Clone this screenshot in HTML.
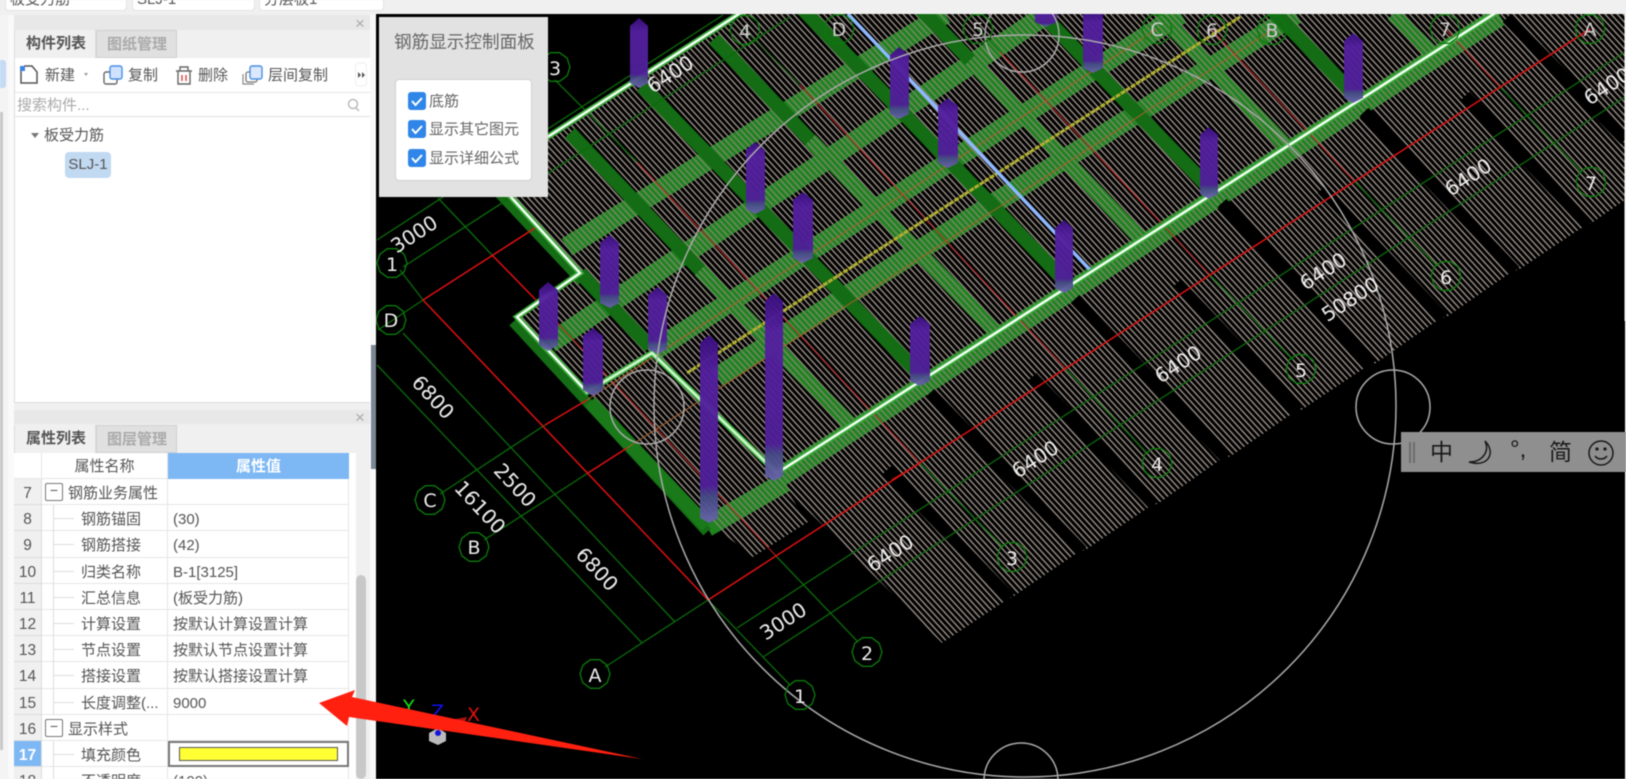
<!DOCTYPE html>
<html lang="zh"><head><meta charset="utf-8"><title>钢筋显示控制面板</title>
<style>
*{box-sizing:border-box}
html,body{margin:0;padding:0;width:1626px;height:779px;overflow:hidden;background:#f0f0f0}
body{font-family:"Liberation Sans","Noto Sans CJK SC",sans-serif;color:#555;font-size:15px}
#w{position:absolute;left:0;top:0;width:1626px;height:779px;overflow:hidden;filter:blur(.45px)}
.a{position:absolute;white-space:nowrap;line-height:1}
.row{display:flex;height:26.2px;line-height:30px}
.i{width:28px;background:#f0f0f0;border:1px solid #dcdcdc;border-width:0 1px 1px 0;text-align:center;font-size:15.5px}
.n{width:126px;border:solid #e6e6e6;border-width:0 1px 1px 0;position:relative;padding-left:39px}
.v{width:181px;border:solid #e6e6e6;border-width:0 1px 1px 0;padding-left:5px;font-size:15px}
.g{padding-left:26px}
.g::before{content:"−";position:absolute;left:3px;top:4px;width:16px;height:16px;border:1px solid #777;border-radius:2px;line-height:13px;text-align:center;font-size:14px;color:#555}
.n:not(.g)::before{content:"";position:absolute;left:12px;top:13px;width:20px;border-top:1px solid #ddd}
.n:not(.g)::after{content:"";position:absolute;left:11px;top:0;height:26px;border-left:1px solid #ddd}
</style></head><body><div id="w">

<!-- top fields -->
<div class="a" style="left:5px;top:-4px;width:122px;height:15px;background:#fff;border-radius:4px;border:1px solid #e4e4e4"></div>
<div class="a" style="left:132px;top:-4px;width:123px;height:15px;background:#fff;border-radius:4px;border:1px solid #e4e4e4"></div>
<div class="a" style="left:259px;top:-4px;width:125px;height:15px;background:#fff;border-radius:4px;border:1px solid #e4e4e4"></div>
<div class="a" style="left:10px;top:-8px;font-size:15px">板受力筋</div>
<div class="a" style="left:137px;top:-8px;font-size:15px">SLJ-1</div>
<div class="a" style="left:264px;top:-8px;font-size:15px">分层板1</div>

<!-- far-left stub -->
<div class="a" style="left:0;top:15px;width:8px;height:764px;background:#f4f4f4"></div>
<div class="a" style="left:0;top:60px;width:6px;height:28px;background:#c5daf5;border-radius:0 3px 3px 0"></div>
<div class="a" style="left:0;top:112px;width:3px;height:638px;background:#c8c8c8"></div>
<div class="a" style="left:8px;top:15px;width:6px;height:764px;background:#fafafa"></div>

<!-- panel 1 -->
<div class="a" style="left:14px;top:15px;width:356px;height:15px;background:#e8e8e8"></div>
<div class="a" style="left:355px;top:15px;font-size:17px;color:#aaa">×</div>
<div class="a" style="left:14px;top:30px;width:82px;height:28px;background:#f0f0f0;border:1px solid #dcdcdc;border-width:0 1px 0 1px;font-weight:bold;font-size:15px;padding:6px 0 0 11px;color:#555">构件列表</div>
<div class="a" style="left:96px;top:30px;width:81px;height:28px;background:#e0e0e0;border:1px solid #d0d0d0;font-size:15px;padding:6px 0 0 10px;color:#aaa;font-weight:bold">图纸管理</div>
<div class="a" style="left:14px;top:58px;width:356px;height:345px;background:#fff;border-left:1px solid #ddd;border-bottom:1px solid #ddd"></div>
<div class="a" style="left:15px;top:92px;width:355px;height:1px;background:#e6e6e6"></div>
<div class="a" style="left:15px;top:116px;width:355px;height:1px;background:#e0e0e0"></div>

<svg class="a" style="left:0;top:0" width="372" height="150" viewBox="0 0 372 150" fill="none">
<path d="M21 71V83H37V72L32 66H24" stroke="#555" stroke-width="1.5"/><rect x="20" y="66" width="5" height="5" fill="#3d83e0"/>
<path d="M84 73l4 0-2 3z" fill="#999"/>
<rect x="104" y="72" width="13" height="12" rx="2" stroke="#666" stroke-width="1.4"/>
<rect x="110" y="66" width="12" height="13" rx="2" fill="#cfe2ff" stroke="#4a8fe0" stroke-width="1.4"/>
<path d="M176 71H192M180 71V67H188V71M178 71V84H190V71" stroke="#666" stroke-width="1.4"/><path d="M182 75V81M186 75V81" stroke="#d94040" stroke-width="1.4"/>
<path d="M243 74V84H254" stroke="#888" stroke-width="1.2"/><rect x="246" y="72" width="11" height="10" rx="2" stroke="#777" stroke-width="1.3"/>
<rect x="250" y="66" width="12" height="13" rx="2" fill="#dbe8ff" stroke="#4a8fe0" stroke-width="1.4"/>
<rect x="355.5" y="63" width="11" height="23" rx="3" fill="#fff" stroke="#eee"/>
<path d="M358 72l3 3-3 3zM362 72l3 3-3 3z" fill="#555"/>
<circle cx="353" cy="104" r="4.5" stroke="#bbb" stroke-width="1.5"/><path d="M356 108l3 3" stroke="#bbb" stroke-width="1.5"/>
<path d="M31 133h8l-4 5z" fill="#777"/>
</svg>
<div class="a" style="left:45px;top:68px">新建</div>
<div class="a" style="left:128px;top:68px">复制</div>
<div class="a" style="left:198px;top:68px">删除</div>
<div class="a" style="left:268px;top:68px">层间复制</div>
<div class="a" style="left:17px;top:98px;color:#aaa;font-size:15px">搜索构件...</div>
<div class="a" style="left:44px;top:128px;font-size:15px">板受力筋</div>
<div class="a" style="left:65px;top:152px;width:46px;height:26px;background:#c2d9f2;border-radius:4px;line-height:26px;text-align:center;font-size:15px">SLJ-1</div>

<!-- panel 2 -->
<div class="a" style="left:14px;top:410px;width:356px;height:14px;background:#e8e8e8"></div>
<div class="a" style="left:355px;top:409px;font-size:17px;color:#aaa">×</div>
<div class="a" style="left:14px;top:425px;width:82px;height:28px;background:#f0f0f0;border:1px solid #dcdcdc;border-width:0 1px 0 1px;font-weight:bold;font-size:15px;padding:6px 0 0 11px;color:#555">属性列表</div>
<div class="a" style="left:96px;top:425px;width:81px;height:28px;background:#e0e0e0;border:1px solid #d0d0d0;font-size:15px;padding:6px 0 0 10px;color:#aaa;font-weight:bold">图层管理</div>
<div class="a" style="left:14px;top:453px;width:342px;height:326px;background:#fff"></div>
<div class="a" style="left:14px;top:453px;width:28px;height:26px;background:#fff;border-right:1px solid #e6e6e6;border-bottom:1px solid #e6e6e6"></div>
<div class="a" style="left:42px;top:453px;width:126px;height:26px;text-align:center;line-height:27px;background:#fff;border-right:1px solid #e6e6e6;border-bottom:1px solid #e6e6e6">属性名称</div>
<div class="a" style="left:168px;top:453px;width:181px;height:26px;text-align:center;line-height:27px;background:#7db8f5;color:#fff;font-weight:bold">属性值</div>
<div class="a" style="left:14px;top:479px;width:335px;white-space:normal;color:#555">
<div class="row"><div class="i">7</div><div class="n g">钢筋业务属性</div><div class="v"></div></div>
<div class="row"><div class="i">8</div><div class="n">钢筋锚固</div><div class="v">(30)</div></div>
<div class="row"><div class="i">9</div><div class="n">钢筋搭接</div><div class="v">(42)</div></div>
<div class="row"><div class="i">10</div><div class="n">归类名称</div><div class="v">B-1[3125]</div></div>
<div class="row"><div class="i">11</div><div class="n">汇总信息</div><div class="v">(板受力筋)</div></div>
<div class="row"><div class="i">12</div><div class="n">计算设置</div><div class="v">按默认计算设置计算</div></div>
<div class="row"><div class="i">13</div><div class="n">节点设置</div><div class="v">按默认节点设置计算</div></div>
<div class="row"><div class="i">14</div><div class="n">搭接设置</div><div class="v">按默认搭接设置计算</div></div>
<div class="row"><div class="i">15</div><div class="n">长度调整(...</div><div class="v">9000</div></div>
<div class="row"><div class="i">16</div><div class="n g">显示样式</div><div class="v"></div></div>
<div class="row"><div class="i" style="background:#7db8f5;color:#fff;font-weight:bold">17</div><div class="n">填充颜色</div><div class="v" style="border:2px solid #777;position:relative"><span style="position:absolute;left:9px;top:4px;width:159px;height:14px;background:#ffff33;border:1px solid #555"></span></div></div>
<div class="row"><div class="i">18</div><div class="n">不透明度</div><div class="v">(100)</div></div>
</div>
<div class="a" style="left:356px;top:575px;width:10px;height:204px;background:#c8c8c8;border-radius:5px"></div>

<!-- divider -->
<div class="a" style="left:370px;top:14px;width:6px;height:765px;background:#f8f8f8"></div>
<div class="a" style="left:371px;top:345px;width:5px;height:124px;background:#7b8794"></div>

<!-- CAD canvas -->
<svg class="a" style="left:0;top:0" width="1626" height="779" viewBox="0 0 1626 779" fill="none">
<defs>
<clipPath id="c"><rect x="376" y="14" width="1249" height="765"/></clipPath>
<pattern id="h" width="4.5" height="4.5" patternUnits="userSpaceOnUse" patternTransform="rotate(47.5)"><rect width="4.5" height="1.5" fill="#92877f"/></pattern>
<linearGradient id="pg" x1="0" y1="0" x2="0" y2="1"><stop offset="0" stop-color="#3a0f80"/><stop offset=".2" stop-color="#54209f"/><stop offset=".8" stop-color="#4f1f98"/><stop offset=".86" stop-color="#464c86"/><stop offset="1" stop-color="#6a64ac"/></linearGradient>
<polygon id="o" points="15,0 12.1,8.8 4.6,14.3 -4.6,14.3 -12.1,8.8 -15,0 -12.1,-8.8 -4.6,-14.3 4.6,-14.3 12.1,-8.8" stroke="#0b7a0b" stroke-width="1.3"/>
</defs>
<g clip-path="url(#c)">
<rect x="376" y="14" width="1250" height="765" fill="#000"/>

<!-- light translucent bands under hatch -->
<g stroke="#1f7f1f" stroke-width="20">
<path d="M567 247L945 14M550 343L1047 14M655 350L1181 14M717 377L1296 14"/>
<path d="M777 479L1500 16"/>
<path d="M707 527L785 482"/>
<path d="M700 270L851 425M810 140L996 332M970 60L1141 239M1159 14L1286 146M1393 14L1432 53" stroke-width="15"/>
</g>

<!-- hatch -->
<path d="M490 174L742 14H1625V200L1593 222L1583 227L1520 269L1510 273L1448 316L1438 320L1376 363L1366 367L1303 409L1293 413L1231 456L1220 460L1159 503L1149 507L1087 549L1077 553L1014 596L1005 601L942 643L785 488L808 522L753 557L715 527L517 317L580 273Z" fill="url(#h)"/>

<!-- green wash over hatch on bands -->
<g stroke="#1f8f1f" stroke-width="20" opacity=".25">
<path d="M567 247L945 14M550 343L1047 14M655 350L1181 14M717 377L1296 14"/>
<path d="M777 479L1500 16"/>
<path d="M707 527L785 482"/>
<path d="M700 270L851 425M810 140L996 332M970 60L1141 239M1159 14L1286 146M1393 14L1432 53" stroke-width="15"/>
</g>

<!-- black gaps -->
<g stroke="#000" stroke-width="12">
<path d="M887 470L1010 598M930 393L1082 551M1032 377L1154 505M1075 299L1226 458M1177 283L1298 411M1222 203L1371 365M1322 189L1443 318M1364 112L1515 271M1465 96L1588 225M1507 18L1625 140"/>
</g>

<!-- dark green beams -->
<g stroke="#146c14" stroke-width="14">
<path d="M570 133L700 270M642 86L924 379M714 39L810 140M786 -8L1069 285M858 -55L970 60M930 -102L1214 193M1074 -196L1359 100"/>
<path d="M580 273L650 347"/>
</g>
<path d="M513 322L707 532" stroke="#146c14" stroke-width="10"/>
<path d="M590 402L707 526" stroke="#1a7a1a" stroke-width="14"/>
<path d="M493 180L585 278" stroke="#146c14" stroke-width="8" transform="translate(-4 4)"/>

<!-- grid: green -->
<g stroke="#0b6b0b" stroke-width="1.3">
<path d="M400 270L423 300M708 600L790 685M438 198L492 255M777 557L858 642M555 80L637 162M920 463L1003 547M1065 368L1147 453M1210 275L1293 360M1355 182L1437 266M1500 87L1582 172M378 330L423 300M440 494L545 425M484 540L588 473M605 667L708 600"/>
<path d="M377 240L723 15M403 267L790 17M403 333L675 622M377 365L642 643M737 628L1625 52M763 657L1625 97"/>
<path d="M745 30L800 85M978 29L1000 52" opacity=".7"/>
</g>
<!-- grid: red -->
<g stroke="#e01010" stroke-width="1.5">
<path d="M423 300L708 600M423 300L535 228M708 600L1590 29M545 425L587 400M588 473L627 448M492 255L535 299"/>
<path d="M892 480L920 463"/>
</g>
<g stroke="#c02020" stroke-width="1">
<path d="M535 299L777 557M637 162L920 463M800 85L1065 368M1000 52L1210 275M1212 30L1355 182M1445 29L1500 87"/>
<path d="M587 400L1157 29M627 448L1272 30" stroke="#a8602a"/>
</g>
<!-- yellow rebar -->
<path d="M687 373L1240 17" stroke="#b0b030" stroke-width="3" stroke-dasharray="5 1"/>

<!-- blue line -->
<path d="M848 14L1092 272" stroke="#8fb8ff" stroke-width="3.5"/>
<path d="M930 110L955 135" stroke="#ddd" stroke-width="1.5" stroke-dasharray="2 3"/>

<!-- plate white edges -->
<g stroke-linecap="square" stroke-linejoin="miter">
<path d="M777 473L1500 10M490 174L742 12" stroke="#39a839" stroke-width="6"/>
<path d="M490 174L580 273L517 317L587 392L652 353L777 473" stroke="#39a839" stroke-width="6"/>
<path d="M777 473L1500 10M490 174L742 12M490 174L580 273L517 317L587 392" stroke="#f4fff4" stroke-width="2.5"/>
<path d="M587 392L652 353L777 473" stroke="#c8f5c8" stroke-width="2.8"/>
</g>

<!-- pillars -->
<g fill="url(#pg)" opacity=".96">
<path d="M630 26L639 18L648 26V83L639 88L630 83Z"/>
<path d="M600 243L610 235L619 243V303L610 308L600 303Z"/>
<path d="M746 150L755 142L765 150V209L755 214L746 209Z"/>
<path d="M648 295L658 287L667 295V349L658 354L648 349Z"/>
<path d="M539 290L548 282L558 290V345L548 351L539 345Z"/>
<path d="M583 336L593 328L603 336V390L593 396L583 390Z"/>
<path d="M700 343L709 335L718 343V518L709 523L700 518Z"/>
<path d="M765 301L774 293L783 301V476L774 481L765 476Z"/>
<path d="M890 55L899 47L909 55V114L899 119L890 114Z"/>
<path d="M938 106L948 98L958 106V163L948 168L938 163Z"/>
<path d="M1083 10H1103V68L1093 73L1083 68Z"/>
<path d="M1035 10H1057V22L1046 27L1035 22Z"/>
<path d="M1200 135L1209 127L1218 135V194L1209 199L1200 194Z"/>
<path d="M1055 228L1064 220L1073 228V288L1064 293L1055 288Z"/>
<path d="M793 200L803 192L813 200V258L803 263L793 258Z"/>
<path d="M910 324L920 316L930 324V381L920 386L910 381Z"/>
<path d="M1344 41L1353 33L1363 41V98L1353 103L1344 98Z"/>
</g>

<!-- big circle and grips -->
<g stroke="#aaa" stroke-width="1.5">
<circle cx="1025" cy="406" r="371"/>
<circle cx="647" cy="407" r="37"/><circle cx="1393" cy="407" r="37"/>
<circle cx="1022" cy="35" r="37"/><circle cx="1021" cy="780" r="37"/>
</g>

<!-- bubbles -->
<use href="#o" x="391" y="320"/><use href="#o" x="430" y="500"/><use href="#o" x="474" y="547"/>
<use href="#o" x="595" y="674"/><use href="#o" x="800" y="695"/><use href="#o" x="867" y="652"/>
<use href="#o" x="1012" y="557"/><use href="#o" x="1157" y="463"/><use href="#o" x="1301" y="369"/>
<use href="#o" x="1446" y="276"/><use href="#o" x="1591" y="182"/><use href="#o" x="392" y="263"/>
<use href="#o" x="555" y="67"/><use href="#o" x="745" y="30"/><use href="#o" x="839" y="29"/>
<use href="#o" x="978" y="29"/><use href="#o" x="1157" y="29"/><use href="#o" x="1212" y="30"/>
<use href="#o" x="1272" y="30"/><use href="#o" x="1445" y="29"/><use href="#o" x="1590" y="29"/>
<g fill="#ececec" font-family="'DejaVu Sans',sans-serif" font-size="19" text-anchor="middle">
<text x="391" y="327">D</text><text x="430" y="507">C</text><text x="474" y="554">B</text>
<text x="595" y="682">A</text><text x="800" y="703">1</text><text x="867" y="660">2</text>
<text x="1012" y="565">3</text><text x="1157" y="471">4</text><text x="1301" y="377">5</text>
<text x="1446" y="284">6</text><text x="1591" y="190">7</text><text x="392" y="271">1</text>
<text x="555" y="75">3</text><text x="745" y="38" fill="#ccc">4</text><text x="839" y="36" fill="#ccc">D</text>
<text x="978" y="36" fill="#ccc">5</text><text x="1157" y="36" fill="#ccc">C</text><text x="1212" y="37" fill="#ccc">6</text>
<text x="1272" y="37" fill="#ccc">B</text><text x="1445" y="36" fill="#ccc">7</text><text x="1590" y="36" fill="#ccc">A</text>
</g>
<!-- dimensions -->
<g fill="#ededed" font-family="'DejaVu Sans',sans-serif" font-size="20" text-anchor="middle">
<text transform="translate(418 240) rotate(-33)">3000</text>
<text transform="translate(674 80) rotate(-33)">6400</text>
<text transform="translate(428 402) rotate(47)">6800</text>
<text transform="translate(510 490) rotate(47)">2500</text>
<text transform="translate(475 512) rotate(47)">16100</text>
<text transform="translate(592 574) rotate(47)">6800</text>
<text transform="translate(787 627) rotate(-33)">3000</text>
<text transform="translate(894 559) rotate(-33)">6400</text>
<text transform="translate(1039 465) rotate(-33)">6400</text>
<text transform="translate(1182 370) rotate(-33)">6400</text>
<text transform="translate(1327 277) rotate(-33)">6400</text>
<text transform="translate(1472 183) rotate(-33)">6400</text>
<text transform="translate(1611 92) rotate(-33)">6400</text>
<text transform="translate(1354 305) rotate(-33)">50800</text>
</g>
<!-- gizmo -->
<g font-family="'DejaVu Sans',sans-serif" font-size="19">
<text x="403" y="713" fill="#12e012">Y</text><text x="431" y="718" fill="#1010f0">Z</text><text x="467" y="721" fill="#e01010">X</text>
</g>
<path d="M450 720L467 717L464 724Z" fill="#b01010"/>
<path d="M429 733L438 728L446 733V741L438 745L429 741Z" fill="#bbb"/>
<circle cx="438" cy="733" r="3" fill="#1414e0"/>
</g>
<path d="M1625 14V321" stroke="#fff"/>

<!-- arrow -->
<path d="M319 703L355 690L352 697L642 759L349 717L347 726Z" fill="#ff2010"/>
</svg>

<!-- control panel -->
<div class="a" style="left:379px;top:17px;width:169px;height:180px;background:#e2e2e2;box-shadow:0 0 2px rgba(0,0,0,.25)"></div>
<div class="a" style="left:394px;top:34px;font-size:17.6px;color:#666">钢筋显示控制面板</div>
<div class="a" style="left:395px;top:79px;width:137px;height:102px;background:#fff;border:1px solid #d0d0d0;border-radius:4px"></div>
<svg class="a" style="left:0;top:0" width="600" height="200" viewBox="0 0 600 200" fill="none">
<rect x="408" y="92" width="18" height="18" rx="3" fill="#2f86e8"/><path d="M412 101l3.5 4 6.5-7" stroke="#fff" stroke-width="2"/>
<rect x="408" y="120" width="18" height="18" rx="3" fill="#2f86e8"/><path d="M412 129l3.5 4 6.5-7" stroke="#fff" stroke-width="2"/>
<rect x="408" y="149" width="18" height="18" rx="3" fill="#2f86e8"/><path d="M412 158l3.5 4 6.5-7" stroke="#fff" stroke-width="2"/>
</svg>
<div class="a" style="left:429px;top:94px;color:#666">底筋</div>
<div class="a" style="left:429px;top:122px;color:#666">显示其它图元</div>
<div class="a" style="left:429px;top:151px;color:#666">显示详细公式</div>

<!-- IME bar -->
<div class="a" style="left:1401px;top:432px;width:225px;height:40px;background:#8f8f8f"></div>
<div class="a" style="left:1409px;top:442px;width:6px;height:21px;border:solid #6c6c6c;border-width:0 2px"></div>
<div class="a" style="left:1430px;top:441px;font-size:23px;color:#1a1a1a">中</div>
<div class="a" style="left:1510px;top:438px;font-size:24px;color:#1a1a1a">°,</div>
<div class="a" style="left:1549px;top:441px;font-size:23px;color:#1a1a1a">简</div>
<svg class="a" style="left:1400px;top:430px" width="226" height="44" viewBox="1400 430 226 44" fill="none" stroke="#1a1a1a" stroke-width="1.5">
<path d="M1485 441C1496 452 1489 468 1469 462C1482 462 1490 452 1485 441Z"/>
<circle cx="1601" cy="453" r="12"/><circle cx="1597" cy="449" r=".9" fill="#1a1a1a"/><circle cx="1605" cy="449" r=".9" fill="#1a1a1a"/>
<path d="M1595 456C1598 460 1604 460 1607 456"/>
</svg>
</div></body></html>
